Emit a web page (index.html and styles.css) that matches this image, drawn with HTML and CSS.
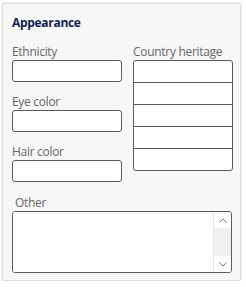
FILE: index.html
```html
<!DOCTYPE html>
<html>
<head>
<meta charset="utf-8">
<link rel="stylesheet" href="styles.css">
</head>
<body>
<div class="panel">
  <div class="title">Appearance</div>
  <div class="cols">
    <div class="left">
      <div class="field">
        <div class="label">Ethnicity</div>
        <input class="input" type="text">
      </div>
      <div class="field">
        <div class="label">Eye color</div>
        <input class="input" type="text">
      </div>
      <div class="field">
        <div class="label">Hair color</div>
        <input class="input" type="text">
      </div>
    </div>
    <div class="right">
      <div class="label">Country heritage</div>
      <div class="grid">
        <div class="cell"></div>
        <div class="cell"></div>
        <div class="cell"></div>
        <div class="cell"></div>
        <div class="cell"></div>
      </div>
    </div>
  </div>
  <div class="other">
    <div class="label other-label">Other</div>
    <div class="area">
      <textarea class="area-text"></textarea>
      <div class="sbar">
        <div class="sbtn">
          <svg width="8" height="5" viewBox="0 0 8 5"><path d="M0.5 4.5 L4 1 L7.5 4.5" fill="none" stroke="#777" stroke-width="1"/></svg>
        </div>
        <div class="strack"></div>
        <div class="sbtn">
          <svg width="8" height="5" viewBox="0 0 8 5"><path d="M0.5 0.5 L4 4 L7.5 0.5" fill="none" stroke="#777" stroke-width="1"/></svg>
        </div>
      </div>
    </div>
  </div>
</div>
</body>
</html>
```
FILE: styles.css
```css
html, body {
  margin: 0;
  padding: 0;
  background: #ffffff;
}
body {
  padding: 3px 0 0 2px;
  font-family: "Open Sans", "Noto Sans", sans-serif;
}
.panel {
  box-sizing: border-box;
  width: 239px;
  height: 278px;
  background: #f7f7f7;
  border: 1px solid #dcdcdc;
  border-radius: 3px;
  box-shadow: 0 0 0 1px #f0f0f0;
  padding: 11px 0 0 9px;
}
.title {
  font-size: 12px;
  font-weight: bold;
  line-height: 16px;
  letter-spacing: -0.3px;
  color: #0d1f52;
  height: 16px;
}
.cols {
  display: flex;
  gap: 10px;
  margin-top: 13px;
}
.left {
  width: 110px;
  display: flex;
  flex-direction: column;
  gap: 12px;
}
.label {
  font-size: 12px;
  line-height: 16px;
  height: 16px;
  letter-spacing: -0.3px;
  color: #666666;
  white-space: nowrap;
}
.input {
  display: block;
  box-sizing: border-box;
  width: 110px;
  height: 22px;
  margin: 0;
  border: 1px solid #5a5a5a;
  border-radius: 3px;
  background: #fff;
  padding: 0 4px;
}
.right {
  width: 100px;
  padding-left: 1px;
}
.grid {
  box-sizing: border-box;
  width: 100px;
  border: 1px solid #5a5a5a;
  border-radius: 3px;
  background: #fff;
  overflow: hidden;
}
.cell {
  height: 21px;
  border-top: 1px solid #5a5a5a;
}
.cell:first-child {
  border-top: none;
  height: 21px;
}
.other {
  margin-top: 13px;
}
.other-label {
  padding-left: 3px;
}
.area {
  box-sizing: border-box;
  width: 220px;
  height: 62px;
  border: 1px solid #5a5a5a;
  border-radius: 3px;
  background: #fff;
  display: flex;
  overflow: hidden;
}
.area-text {
  flex: 1;
  border: none;
  margin: 0;
  padding: 2px 4px;
  resize: none;
  overflow: hidden;
  outline: none;
  background: #fff;
}
.sbar {
  width: 17px;
  border-left: 1px solid #e6e6e6;
  display: flex;
  flex-direction: column;
}
.sbtn {
  height: 16px;
  display: flex;
  align-items: center;
  justify-content: center;
  background: #fff;
}
.strack {
  flex: 1;
  background: #f0f0f0;
}
```
